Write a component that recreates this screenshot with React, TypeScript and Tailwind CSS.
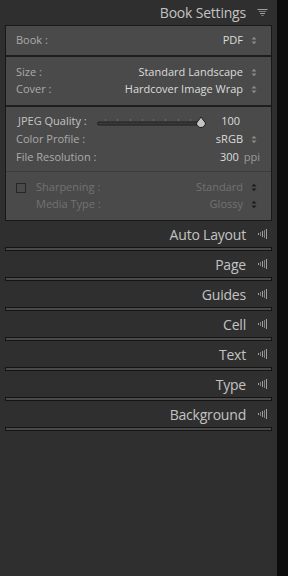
import React from "react";

const font = { fontFamily: '"Open Sans", "Liberation Sans", sans-serif' };

function Updown({ dark = false }: { dark?: boolean }) {
  const c = dark ? "#1c1c1c" : "#8a8a8a";
  return (
    <svg width="6" height="9" viewBox="0 0 6 9" className="shrink-0">
      <path d="M0.5 3.5 L3 0.8 L5.5 3.5 Z" fill={c} />
      <path d="M0.5 5.5 L3 8.2 L5.5 5.5 Z" fill={c} />
    </svg>
  );
}

function LeftTri() {
  return (
    <svg width="11" height="10" viewBox="0 0 11 10" className="shrink-0">
      {[0, 1, 2, 3, 4].map((i) => {
        const h = 2 + i * 2;
        const x = 1 + i * 2;
        return <rect key={i} x={x} y={5 - h / 2} width="1" height={h} fill={i % 2 ? "#7e7e7e" : "#a0a0a0"} />;
      })}
    </svg>
  );
}

function DownTri() {
  return (
    <svg width="11" height="9" viewBox="0 0 11 9" className="shrink-0">
      {[0, 1, 2, 3].map((i) => {
        const w = 10 - i * 2.5;
        return <rect key={i} x={(11 - w) / 2} y={1 + i * 2} width={w} height="1" fill={i % 2 ? "#7e7e7e" : "#a0a0a0"} />;
      })}
    </svg>
  );
}

function Header({ title }: { title: string }) {
  return (
    <div className="flex flex-col">
      <div className="h-[26px] flex items-center justify-end pr-[9px]">
        <span className="text-[14px] text-[#c3c3c3] tracking-[-0.2px]" style={font}>
          {title}
        </span>
        <span className="ml-[11px]">
          <LeftTri />
        </span>
      </div>
      <div className="mx-[5px] h-[4px] border border-[#141414] bg-[#4a4a4a]" />
    </div>
  );
}

function Row({ label, value }: { label: string; value: string }) {
  return (
    <div className="flex items-center h-[17px] pl-[10px] pr-[14px]">
      <span className="text-[11px] text-[#ababab]" style={font}>
        {label}
      </span>
      <span className="ml-auto text-[11px] text-[#dcdcdc]" style={font}>
        {value}
      </span>
      <span className="ml-[8px]">
        <Updown />
      </span>
    </div>
  );
}

function Slider() {
  const ticks = [105, 117, 130, 142, 153, 165, 178, 190];
  return (
    <svg width="112" height="14" viewBox="0 0 112 14" className="shrink-0">
      {ticks.map((t) => (
        <rect key={t} x={t - 96} y="5" width="1" height="2" fill="#6a6a6a" />
      ))}
      <rect x="1.5" y="8" width="105" height="3" rx="1.5" fill="#3a3a3a" stroke="#202020" strokeWidth="1" />
      <path d="M105 3 L109.5 9 A4.5 4.5 0 1 1 100.5 9 Z" fill="#c4c4c4" stroke="#1a1a1a" strokeWidth="1" />
    </svg>
  );
}

export default function App() {
  return (
    <div className="w-[288px] h-[576px] flex bg-[#0c0c0c]" style={font}>
      <div className="w-[277px] h-full bg-[#2f2f2f] flex flex-col">
        <div className="h-[25px] flex items-center justify-end pr-[9px]">
          <span className="text-[14px] text-[#c3c3c3] tracking-[-0.2px]" style={font}>
            Book Settings
          </span>
          <span className="ml-[11px]">
            <DownTri />
          </span>
        </div>
        <div className="mx-[5px] border border-[#181818] bg-[#4a4a4a] flex flex-col">
          <div className="py-[6px]">
            <Row label="Book :" value="PDF" />
          </div>
          <div className="border-t-2 border-[#1e1e1e] py-[7px]">
            <Row label="Size :" value="Standard Landscape" />
            <Row label="Cover :" value="Hardcover Image Wrap" />
          </div>
          <div className="border-t-2 border-[#1e1e1e] py-[5px]">
            <div className="flex items-center h-[18px] pl-[12px] pr-[31px]">
              <span className="w-[78px] text-[11px] text-[#c4c4c4] whitespace-nowrap">JPEG Quality :</span>
              <Slider />
              <span className="ml-auto text-[11px] text-[#dcdcdc]">100</span>
            </div>
            <div className="flex items-center h-[18px] pl-[10px] pr-[14px]">
              <span className="text-[11px] text-[#ababab]">Color Profile :</span>
              <span className="ml-auto text-[11px] text-[#dcdcdc]">sRGB</span>
              <span className="ml-[8px]">
                <Updown />
              </span>
            </div>
            <div className="flex items-center h-[18px] pl-[10px] pr-[11px]">
              <span className="text-[11px] text-[#ababab]">File Resolution :</span>
              <span className="ml-auto text-[11px] text-[#dcdcdc]">300</span>
              <span className="ml-[5px] text-[11px] text-[#9a9a9a]">ppi</span>
            </div>
          </div>
          <div className="border-t border-[#3c3c3c] py-[7px]">
            <div className="flex items-center h-[17px] pl-[10px] pr-[14px]">
              <span className="w-[10px] h-[10px] border border-[#262626] shrink-0" />
              <span className="ml-[10px] text-[11px] text-[#727272]">Sharpening :</span>
              <span className="ml-auto text-[11px] text-[#727272]">Standard</span>
              <span className="ml-[8px]">
                <Updown dark />
              </span>
            </div>
            <div className="flex items-center h-[17px] pl-[30px] pr-[14px]">
              <span className="text-[11px] text-[#727272]">Media Type :</span>
              <span className="ml-auto text-[11px] text-[#727272]">Glossy</span>
              <span className="ml-[8px]">
                <Updown dark />
              </span>
            </div>
          </div>
        </div>
        <Header title="Auto Layout" />
        <Header title="Page" />
        <Header title="Guides" />
        <Header title="Cell" />
        <Header title="Text" />
        <Header title="Type" />
        <Header title="Background" />
      </div>
    </div>
  );
}
